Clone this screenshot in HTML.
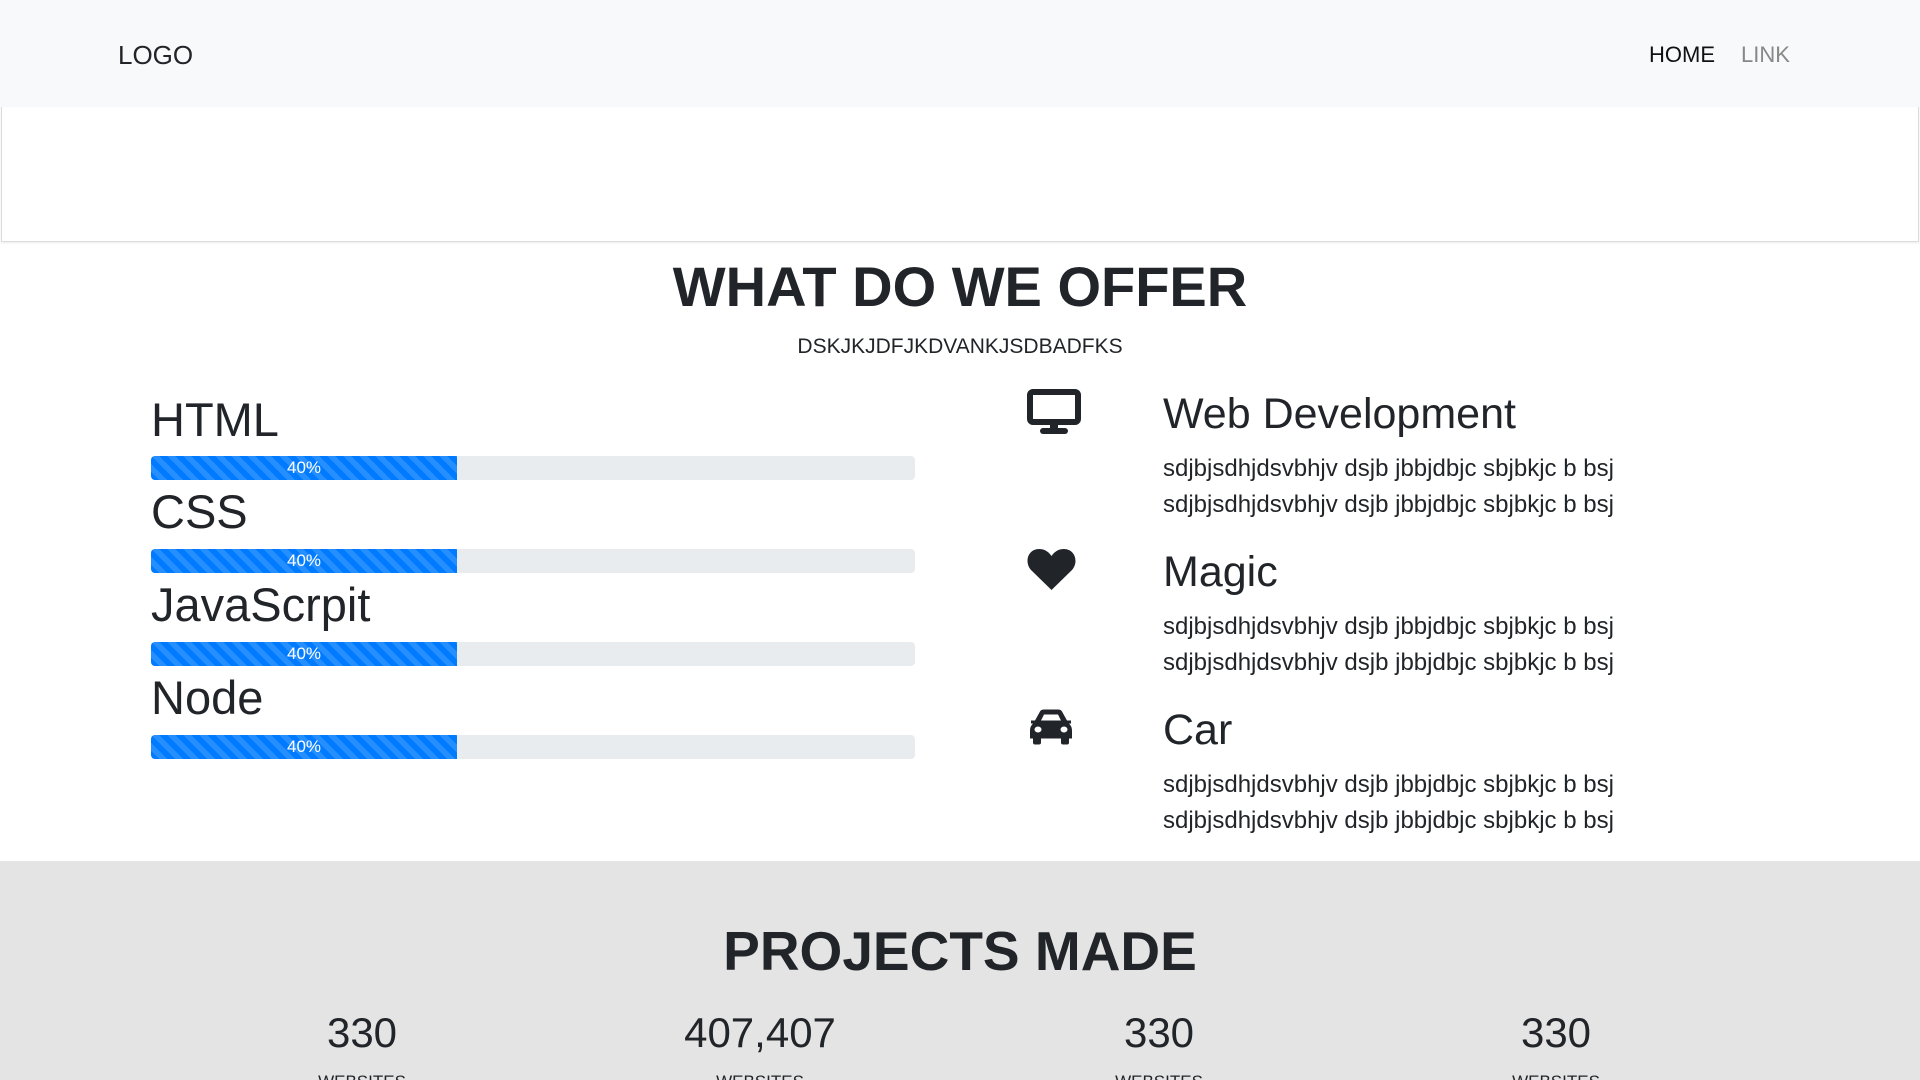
<!DOCTYPE html>
<html><head><meta charset="utf-8"><style>
*{margin:0;padding:0;box-sizing:border-box}
html,body{width:1920px;height:1080px;overflow:hidden}
body{background:#fff;font-family:"Liberation Sans",sans-serif;color:#212529;position:relative}
.a{position:absolute;line-height:1;white-space:nowrap}
nav{position:absolute;left:0;top:0;width:1920px;height:107px;background:#f8f9fa}
.box{position:absolute;left:1px;top:107px;width:1918px;height:135px;border:1px solid #dcdcdc;border-top:none;box-shadow:0 1px 2px rgba(0,0,0,.08)}
.bar{position:absolute;left:151px;width:764px;height:24px;background:#e9ecef;border-radius:4px;overflow:hidden}
.fill{width:306px;height:24px;background-color:#007bff;background-image:linear-gradient(45deg,rgba(255,255,255,.15) 25%,transparent 25%,transparent 50%,rgba(255,255,255,.15) 50%,rgba(255,255,255,.15) 75%,transparent 75%,transparent);background-size:16px 16px;color:#fff;font-size:17px;text-align:center;line-height:24px}
.gray{position:absolute;left:0;top:861px;width:1920px;height:219px;background:#e4e4e4;overflow:hidden}
.c{transform:translateX(-50%)}
.t{font-size:24px}
</style></head><body>
<nav>
<div class="a" style="left:118px;top:42px;font-size:26px">LOGO</div>
<div class="a" style="left:1649px;top:44px;font-size:22px;color:#111">HOME</div>
<div class="a" style="left:1741px;top:44px;font-size:22px;color:#888">LINK</div>
</nav>
<div class="box"></div>
<div class="a c" style="left:960px;top:259px;font-size:56px;font-weight:bold">WHAT DO WE OFFER</div>
<div class="a c" style="left:960px;top:336px;font-size:21px">DSKJKJDFJKDVANKJSDBADFKS</div>

<div class="a" style="left:151px;top:396px;font-size:47px">HTML</div>
<div class="bar" style="top:456px"><div class="fill">40%</div></div>
<div class="a" style="left:151px;top:488px;font-size:47px">CSS</div>
<div class="bar" style="top:549px"><div class="fill">40%</div></div>
<div class="a" style="left:151px;top:581px;font-size:47px">JavaScrpit</div>
<div class="bar" style="top:642px"><div class="fill">40%</div></div>
<div class="a" style="left:151px;top:674px;font-size:47px">Node</div>
<div class="bar" style="top:735px"><div class="fill">40%</div></div>

<svg style="position:absolute;left:1027px;top:389px" width="54" height="46" viewBox="0 0 54 46"><rect x="3" y="3" width="48" height="30" rx="3" fill="none" stroke="#212529" stroke-width="6"/><rect x="23" y="34" width="8" height="6" fill="#212529"/><rect x="13" y="39" width="28" height="6" rx="3" fill="#212529"/></svg>
<div class="a" style="left:1163px;top:393px;font-size:43px">Web Development</div>
<div class="a t" style="left:1163px;top:457px">sdjbjsdhjdsvbhjv dsjb jbbjdbjc sbjbkjc b bsj</div>
<div class="a t" style="left:1163px;top:493px">sdjbjsdhjdsvbhjv dsjb jbbjdbjc sbjbkjc b bsj</div>

<svg style="position:absolute;left:1027px;top:547px" width="49" height="44" viewBox="0 0 49 44"><path d="M24.5 43 L4 23 C-3 15 1 2 12 2 C17 2 21 4 24.5 9 C28 4 32 2 37 2 C48 2 52 15 45 23 Z" fill="#212529"/></svg>
<div class="a" style="left:1163px;top:551px;font-size:43px">Magic</div>
<div class="a t" style="left:1163px;top:615px">sdjbjsdhjdsvbhjv dsjb jbbjdbjc sbjbkjc b bsj</div>
<div class="a t" style="left:1163px;top:651px">sdjbjsdhjdsvbhjv dsjb jbbjdbjc sbjbkjc b bsj</div>

<svg style="position:absolute;left:1027px;top:708px" width="48" height="38" viewBox="0 0 48 37"><path d="M13 3 Q14 1 17 1 L31 1 Q34 1 35 3 L40 12 L44 12 L44 15 L42 15 Q45 18 45 22 L45 30 L3 30 L3 22 Q3 18 6 15 L4 15 L4 12 L8 12 Z" fill="#212529"/><path d="M14 12 L17 6 L31 6 L34 12 Z" fill="#fff"/><ellipse cx="11" cy="21" rx="3.5" ry="3" fill="#fff"/><ellipse cx="37" cy="21" rx="3.5" ry="3" fill="#fff"/><rect x="6" y="28" width="8" height="8" rx="2" fill="#212529"/><rect x="34" y="28" width="8" height="8" rx="2" fill="#212529"/></svg>
<div class="a" style="left:1163px;top:709px;font-size:43px">Car</div>
<div class="a t" style="left:1163px;top:773px">sdjbjsdhjdsvbhjv dsjb jbbjdbjc sbjbkjc b bsj</div>
<div class="a t" style="left:1163px;top:809px">sdjbjsdhjdsvbhjv dsjb jbbjdbjc sbjbkjc b bsj</div>

<div class="gray">
<div class="a c" style="left:960px;top:63px;font-size:55px;font-weight:bold">PROJECTS MADE</div>
<div class="a c" style="left:362px;top:151px;font-size:42px">330</div>
<div class="a c" style="left:760px;top:151px;font-size:42px">407,407</div>
<div class="a c" style="left:1159px;top:151px;font-size:42px">330</div>
<div class="a c" style="left:1556px;top:151px;font-size:42px">330</div>
<div class="a c" style="left:362px;top:212px;font-size:17px">WEBSITES</div>
<div class="a c" style="left:760px;top:212px;font-size:17px">WEBSITES</div>
<div class="a c" style="left:1159px;top:212px;font-size:17px">WEBSITES</div>
<div class="a c" style="left:1556px;top:212px;font-size:17px">WEBSITES</div>
</div>
</body></html>
